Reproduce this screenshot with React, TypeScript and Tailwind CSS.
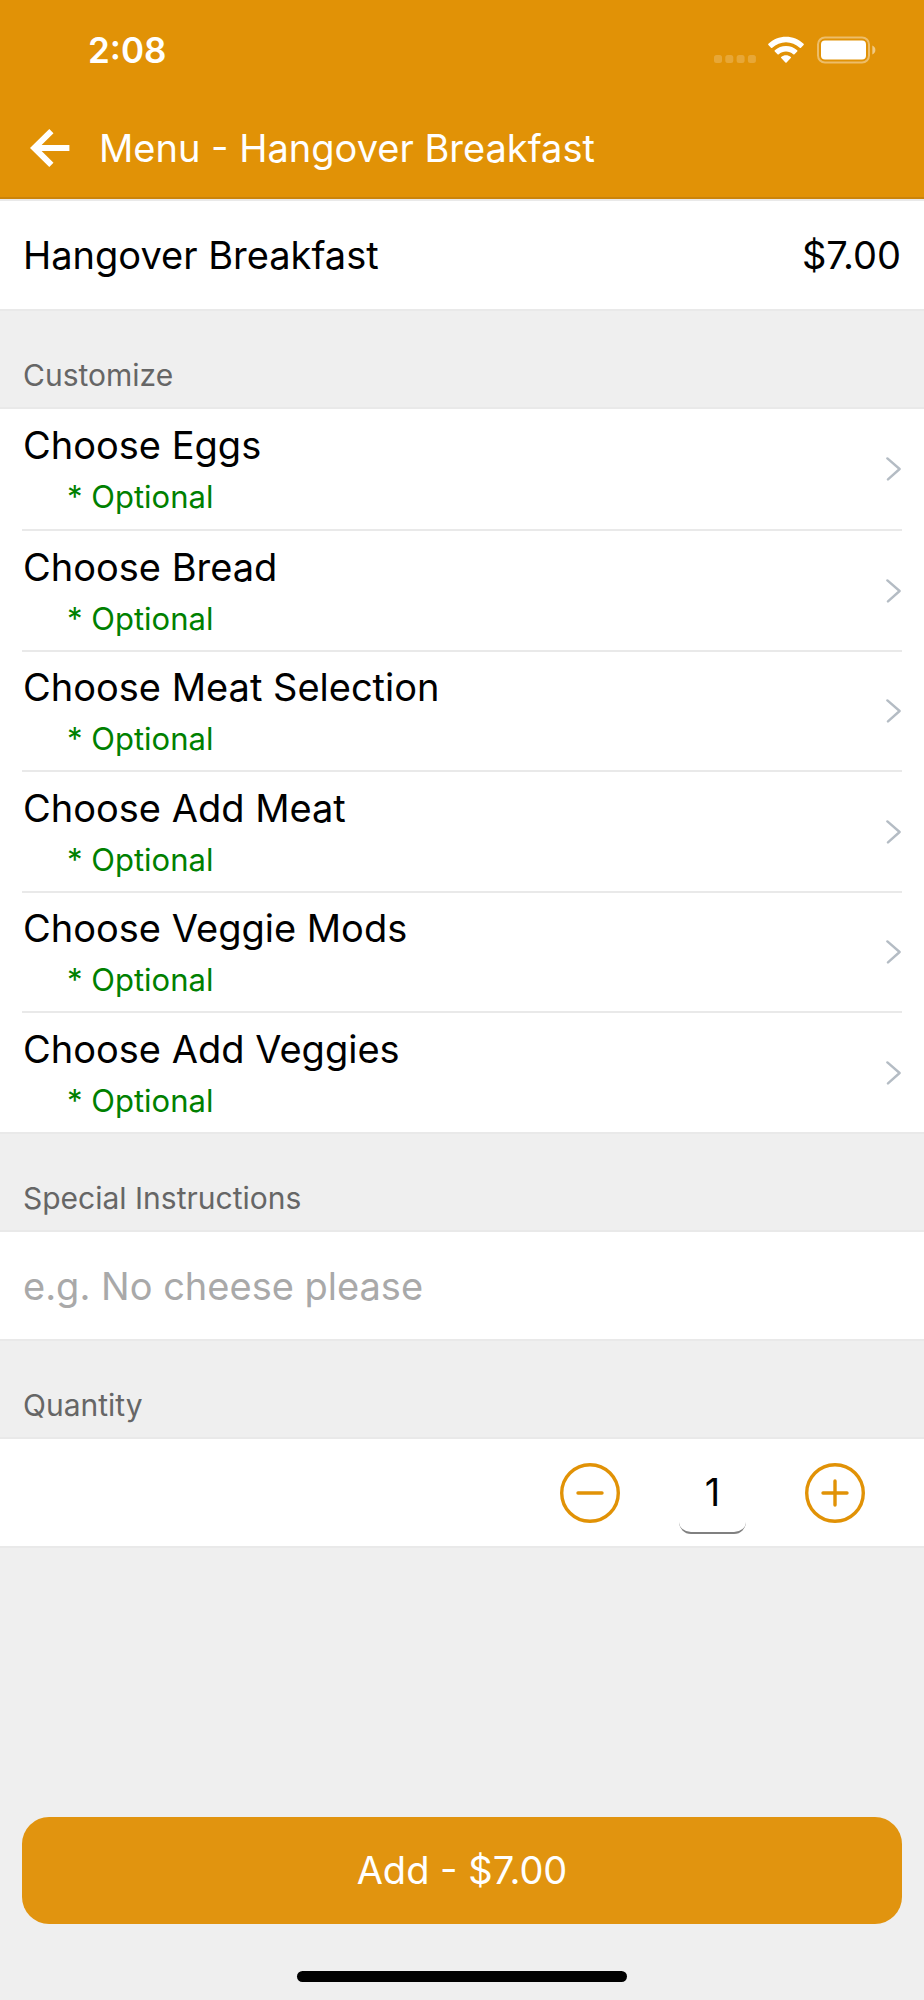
import { useState } from 'react';
import type { ReactNode } from 'react';

const UNIT_PRICE = 7;

const OPTION_GROUPS = [
  'Choose Eggs',
  'Choose Bread',
  'Choose Meat Selection',
  'Choose Add Meat',
  'Choose Veggie Mods',
  'Choose Add Veggies',
];

function StatusBar() {
  return (
    <div className="flex h-[100px] items-center justify-between pl-[88px] pr-12">
      <span className="text-[35px] leading-10 font-semibold">2:08</span>
      <div className="flex items-center gap-3" aria-hidden="true">
        <svg className="h-7 w-[42px]" viewBox="0 0 42 28" fill="#fff" fillOpacity="0.2">
          <rect x="0" y="19" width="8" height="8" rx="2.5" />
          <rect x="11.3" y="19" width="8" height="8" rx="2.5" />
          <rect x="22.6" y="19" width="8" height="8" rx="2.5" />
          <rect x="33.9" y="19" width="8" height="8" rx="2.5" />
        </svg>
        <svg className="h-7 w-9" viewBox="0 0 36 28" fill="#fff">
          <path d="M18 0.8C24.6 0.8 30.8 3.3 35.6 7.8C36 8.2 36 8.7 35.6 9.1L33 11.8C32.6 12.2 32.1 12.2 31.7 11.8C28 8.4 23.1 6.3 18 6.3C12.9 6.3 8 8.4 4.3 11.8C3.9 12.2 3.4 12.2 3 11.8L0.4 9.1C0 8.7 0 8.2 0.4 7.8C5.2 3.3 11.4 0.8 18 0.8Z" />
          <path d="M18 10C22.1 10 26.1 11.5 29.2 14.2C29.6 14.6 29.6 15.1 29.2 15.5L26.5 18.2C26.1 18.6 25.7 18.6 25.2 18.3C23.2 16.6 20.7 15.6 18 15.6C15.3 15.6 12.8 16.6 10.8 18.3C10.3 18.6 9.9 18.6 9.5 18.2L6.8 15.5C6.4 15.1 6.4 14.6 6.8 14.2C9.9 11.5 13.9 10 18 10Z" />
          <path d="M18 19.3C19.7 19.3 21.4 19.9 22.8 20.9C23.2 21.2 23.2 21.7 22.8 22.1L18.6 26.4C18.2 26.8 17.8 26.8 17.4 26.4L13.2 22.1C12.8 21.7 12.8 21.2 13.2 20.9C14.6 19.9 16.3 19.3 18 19.3Z" />
        </svg>
        <svg className="h-7 w-[60px]" viewBox="0 0 60 28">
          <rect x="2" y="1.5" width="51" height="25" rx="7" fill="none" stroke="#fff" strokeOpacity="0.4" strokeWidth="2" />
          <rect x="5" y="4.5" width="45" height="19" rx="4" fill="#fff" />
          <path d="M56.3 9.5C58.2 10.4 59.4 12 59.4 14C59.4 16 58.2 17.6 56.3 18.5Z" fill="#fff" fillOpacity="0.5" />
        </svg>
      </div>
    </div>
  );
}

function BackIcon() {
  return (
    <svg className="h-10 w-10" viewBox="0 0 40 40" fill="none" stroke="#fff" strokeWidth="6" aria-hidden="true">
      <path d="M21.4 3.2L4.2 20L21.4 36.8" />
      <path d="M5 20H39.4" />
    </svg>
  );
}

function ChevronIcon() {
  return (
    <svg
      className="h-6 w-4 shrink-0"
      viewBox="0 0 16 24"
      fill="none"
      stroke="#b4bcc4"
      strokeWidth="2.4"
      strokeLinecap="round"
      strokeLinejoin="round"
      aria-hidden="true"
    >
      <path d="M1.4 1.4L13.6 12L2 22.4" />
    </svg>
  );
}

function RoundButton({ label, onClick, children }: { label: string; onClick: () => void; children: ReactNode }) {
  return (
    <button type="button" aria-label={label} onClick={onClick} className="size-[60px] cursor-pointer">
      <svg viewBox="0 0 60 60" fill="none" stroke="#e19206" strokeWidth="3.4" strokeLinecap="round" aria-hidden="true">
        <circle cx="30" cy="30" r="28.3" />
        {children}
      </svg>
    </button>
  );
}

function SectionTitle({ children, htmlFor }: { children: ReactNode; htmlFor?: string }) {
  return (
    <h2 className="px-[23px] pt-11 pb-3 text-[30px] leading-10 text-[#666]">
      {htmlFor ? <label htmlFor={htmlFor}>{children}</label> : children}
    </h2>
  );
}

export default function App() {
  const [quantity, setQuantity] = useState(1);
  const [instructions, setInstructions] = useState('');

  const total = `$${(UNIT_PRICE * quantity).toFixed(2)}`;

  return (
    <div className="flex min-h-screen flex-col bg-[#efefef] font-['Inter','Liberation_Sans',sans-serif] text-black">
      <header className="border-b-2 border-[#cb840a] bg-[#e19206] text-white">
        <StatusBar />
        <div className="flex items-center gap-[29px] px-[30px] pt-6 pb-[25px]">
          <button type="button" aria-label="Back" className="cursor-pointer">
            <BackIcon />
          </button>
          <h1 className="text-[38px] leading-[48px]">Menu - Hangover Breakfast</h1>
        </div>
      </header>

      <main>
        <div className="flex items-center justify-between border-y-2 border-[#e9e9e9] bg-white px-[23px] py-[30px] text-[38px] leading-[48px]">
          <span>Hangover Breakfast</span>
          <span>$7.00</span>
        </div>

        <SectionTitle>Customize</SectionTitle>
        <ul className="border-y-2 border-[#e9e9e9] bg-white px-[22px]">
          {OPTION_GROUPS.map((name) => (
            <li key={name} className="h-[120px] border-t-2 border-[#e9e9e9] first:border-t-0 even:h-[121px]">
              <button type="button" className="flex h-full w-full cursor-pointer items-center justify-between text-left">
                <span className="flex flex-col pl-px">
                  <span className="text-[38px] leading-[56px]">{name}</span>
                  <span className="pl-11 text-[31px] leading-[48px] text-[#008000]">* Optional</span>
                </span>
                <ChevronIcon />
              </button>
            </li>
          ))}
        </ul>

        <SectionTitle htmlFor="instructions">Special Instructions</SectionTitle>
        <div className="border-y-2 border-[#e9e9e9] bg-white">
          <input
            id="instructions"
            type="text"
            value={instructions}
            onChange={(e) => setInstructions(e.target.value)}
            placeholder="e.g. No cheese please"
            className="block h-[107px] w-full px-[23px] text-[38px] outline-none placeholder:text-[#a9a9a9]"
          />
        </div>

        <SectionTitle htmlFor="quantity">Quantity</SectionTitle>
        <div className="flex items-center justify-end gap-[59px] border-y-2 border-[#e9e9e9] bg-white py-3 pr-[59px]">
          <RoundButton label="Decrease quantity" onClick={() => setQuantity((q) => Math.max(1, q - 1))}>
            <path d="M18 30H42" />
          </RoundButton>
          <input
            id="quantity"
            type="text"
            inputMode="numeric"
            readOnly
            value={quantity}
            className="h-[83px] w-[67px] rounded-xl border-b-2 border-[#808080] text-center text-[38px] outline-none"
          />
          <RoundButton label="Increase quantity" onClick={() => setQuantity((q) => q + 1)}>
            <path d="M18 30H42M30 18V42" />
          </RoundButton>
        </div>
      </main>

      <footer className="mt-auto flex flex-col items-center px-[22px] pb-[18px]">
        <button
          type="button"
          className="mb-[47px] h-[107px] w-full cursor-pointer rounded-[27px] bg-[#e1940f] text-[38px] text-white"
        >
          Add - {total}
        </button>
        <div className="h-[11px] w-[330px] rounded-full bg-black" />
      </footer>
    </div>
  );
}
